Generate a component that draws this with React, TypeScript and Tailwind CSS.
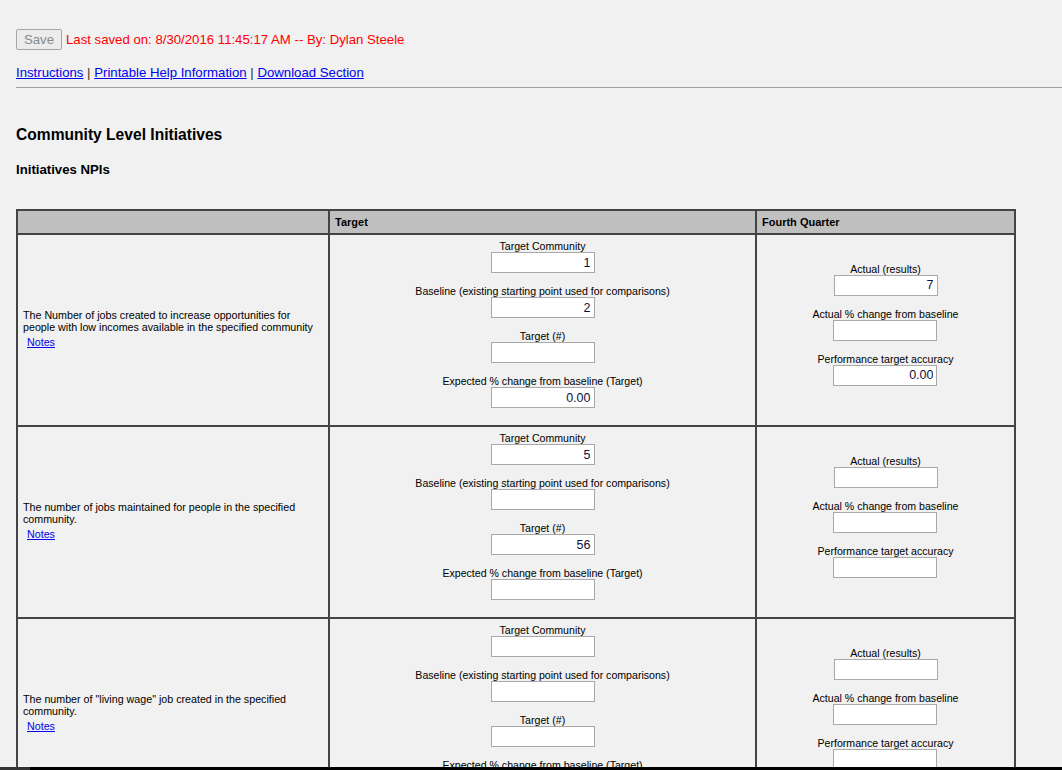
import React from 'react';

type Field = { label: string; value?: string };
type Row = { text: string; target: Field[]; quarter: Field[] };

const rows: Row[] = [
  {
    text: 'The Number of jobs created to increase opportunities for people with low incomes available in the specified community',
    target: [
      { label: 'Target Community', value: '1' },
      { label: 'Baseline (existing starting point used for comparisons)', value: '2' },
      { label: 'Target (#)' },
      { label: 'Expected % change from baseline (Target)', value: '0.00' },
    ],
    quarter: [
      { label: 'Actual (results)', value: '7' },
      { label: 'Actual % change from baseline' },
      { label: 'Performance target accuracy', value: '0.00' },
    ],
  },
  {
    text: 'The number of jobs maintained for people in the specified community.',
    target: [
      { label: 'Target Community', value: '5' },
      { label: 'Baseline (existing starting point used for comparisons)' },
      { label: 'Target (#)', value: '56' },
      { label: 'Expected % change from baseline (Target)' },
    ],
    quarter: [
      { label: 'Actual (results)' },
      { label: 'Actual % change from baseline' },
      { label: 'Performance target accuracy' },
    ],
  },
  {
    text: 'The number of "living wage" job created in the specified community.',
    target: [
      { label: 'Target Community' },
      { label: 'Baseline (existing starting point used for comparisons)' },
      { label: 'Target (#)' },
      { label: 'Expected % change from baseline (Target)' },
    ],
    quarter: [
      { label: 'Actual (results)' },
      { label: 'Actual % change from baseline' },
      { label: 'Performance target accuracy' },
    ],
  },
];

const FieldBox: React.FC<{ f: Field }> = ({ f }) => (
  <div className="flex flex-col items-center pb-3">
    <div className="text-[10.6px] leading-3 text-black">{f.label}</div>
    <input
      readOnly
      value={f.value ?? ''}
      className="w-[104px] h-[21px] border border-[#a9a9a9] bg-white px-[3px] text-right text-[12.5px] text-[#10103a] outline-none"
    />
  </div>
);

export default function App() {
  return (
    <div className="h-screen overflow-hidden bg-[#f0f1f0] font-['Liberation_Sans',Arial,sans-serif] pt-[29px]">
      {/* Save bar */}
      <div className="flex items-center gap-1 pl-4">
        <button className="w-[46px] h-[21px] rounded-[2px] border border-[#a6a6a6] bg-[#ececec] text-[13.2px] text-[#8a8a8a]">
          Save
        </button>
        <span className="text-[13.2px] text-[#ff0000]">Last saved on: 8/30/2016 11:45:17 AM -- By: Dylan Steele</span>
      </div>

      <div className="mt-[15px] pl-4 text-[13.2px] leading-4 text-[#333]">
        <a className="text-[#0000ee] underline">Instructions</a> |{' '}
        <a className="text-[#0000ee] underline">Printable Help Information</a> |{' '}
        <a className="text-[#0000ee] underline">Download Section</a>
      </div>

      <div className="ml-4 mt-[6px] h-px bg-[#a0a0a0]" />

      <h1 className="mt-[38px] pl-4 text-[15.6px] leading-[18px] font-bold text-black">Community Level Initiatives</h1>
      <h2 className="mt-[18px] pl-4 text-[13.2px] leading-[15px] font-bold text-black">Initiatives NPIs</h2>

      {/* Table */}
      <div className="ml-4 mt-[32px] w-[1000px] border-t-2 border-l-2 border-[#444] grid grid-cols-[312px_427px_259px]">
        <div className="h-[24px] bg-[#c0c0c0] border-r-2 border-b-2 border-[#444]" />
        <div className="h-[24px] bg-[#c0c0c0] border-r-2 border-b-2 border-[#444] pl-[5px] flex items-center text-[11px] font-bold">
          Target
        </div>
        <div className="h-[24px] bg-[#c0c0c0] border-r-2 border-b-2 border-[#444] pl-[5px] flex items-center text-[11px] font-bold">
          Fourth Quarter
        </div>

        {rows.map((r, i) => (
          <React.Fragment key={i}>
            <div className="h-[192px] border-r-2 border-b-2 border-[#444] px-[5px] pb-[4px] flex flex-col justify-center">
              <div className="text-[10.7px] leading-3 text-black">{r.text}</div>
              <a className="mt-[3px] ml-1 text-[10.7px] leading-3 text-[#0000ee] underline">Notes</a>
            </div>
            <div className="h-[192px] border-r-2 border-b-2 border-[#444] flex flex-col items-center justify-center">
              {r.target.map((f, j) => (
                <FieldBox key={j} f={f} />
              ))}
            </div>
            <div className="h-[192px] border-r-2 border-b-2 border-[#444] flex flex-col items-center justify-center">
              {r.quarter.map((f, j) => (
                <FieldBox key={j} f={f} />
              ))}
            </div>
          </React.Fragment>
        ))}
      </div>

      {/* bottom strip seen in the capture */}
      <div className="fixed bottom-0 left-0 right-0 h-[3px] flex">
        <div className="w-[30px] bg-[#333]" />
        <div className="flex-1 bg-black" />
      </div>
    </div>
  );
}
